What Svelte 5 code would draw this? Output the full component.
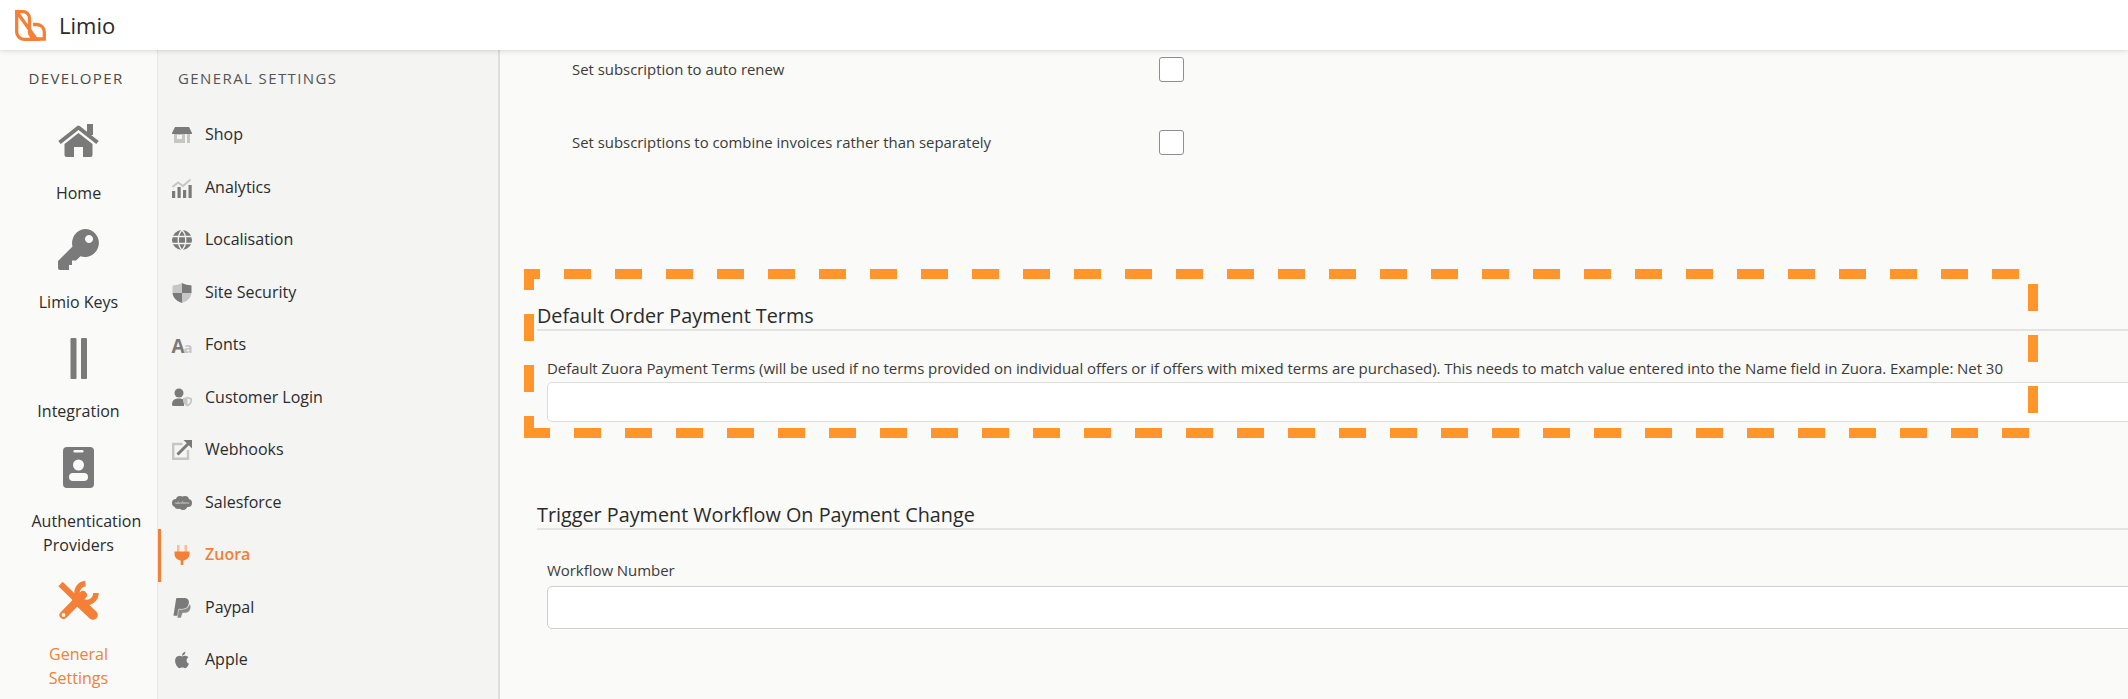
<script>
  const devItems = [
    { key: 'home', label: 'Home' },
    { key: 'key', label: 'Limio Keys' },
    { key: 'integration', label: 'Integration' },
    { key: 'auth', label: 'Authentication Providers' },
    { key: 'tools', label: 'General Settings', active: true }
  ];

  const settings = [
    { key: 'shop', label: 'Shop' },
    { key: 'analytics', label: 'Analytics' },
    { key: 'globe', label: 'Localisation' },
    { key: 'shield', label: 'Site Security' },
    { key: 'fonts', label: 'Fonts' },
    { key: 'login', label: 'Customer Login' },
    { key: 'hooks', label: 'Webhooks' },
    { key: 'salesforce', label: 'Salesforce' },
    { key: 'plug', label: 'Zuora', active: true },
    { key: 'paypal', label: 'Paypal' },
    { key: 'apple', label: 'Apple' }
  ];

  const dark = '#7a7a7a';
  const light = '#c6c6c6';
  const orange = '#f47f36';
  const bg = '#fafaf8';
  const bg2 = '#f4f4f3';
</script>

{#snippet devIcon(name)}
  {#if name === 'home'}
    <svg width="41" height="41" viewBox="0 -4 41 41">
      <rect x="29" y="0" width="6" height="11" fill={dark} />
      <path d="M1.5 18.5 20.5 3.5 39.5 18.5" fill="none" stroke={dark} stroke-width="4" stroke-linejoin="round" />
      <path d="M20.5 9 34.5 20V31a2 2 0 0 1-2 2H25V23H16V33H8.500a2 2 0 0 1-2-2V20Z" fill={dark} />
    </svg>
  {:else if name === 'key'}
    <svg width="41" height="41" viewBox="0 0 41 41">
      <path fill-rule="evenodd" fill={dark} d="M27 0a14 14 0 1 1-4.500 27.300L18 31.500H14V36H11V41H2a2 2 0 0 1-2-2V32L14.500 17.500A14 14 0 0 1 27 0ZM31 6a4 4 0 1 0 .01 0Z" />
    </svg>
  {:else if name === 'integration'}
    <svg width="41" height="41" viewBox="0 0 41 41">
      <rect x="12.500" y="0" width="6" height="41" rx="1" fill={dark} />
      <rect x="23" y="0" width="6" height="41" rx="1" fill={dark} />
    </svg>
  {:else if name === 'auth'}
    <svg width="41" height="41" viewBox="0 0 41 41">
      <rect x="5" y="0" width="31" height="41" rx="4" fill={dark} />
      <rect x="15.500" y="3" width="10" height="2.500" rx="1.200" fill={bg} />
      <circle cx="20.500" cy="18" r="5.500" fill={bg} />
      <rect x="11" y="26" width="19" height="8" rx="4" fill={bg} />
    </svg>
  {:else if name === 'tools'}
    <svg width="41" height="41" viewBox="0 0 41 41">
      <path d="M2.500 4 19 20" stroke={orange} stroke-width="6" fill="none" />
      <path d="M19 20 35 35" stroke={orange} stroke-width="9.500" stroke-linecap="round" fill="none" />
      <path d="M5.500 35 25 15" stroke={orange} stroke-width="8" stroke-linecap="round" fill="none" />
      <path d="M27.500 3.500A9.500 9.500 0 1 0 38 13" stroke={orange} stroke-width="5.500" fill="none" />
      <circle cx="5.500" cy="35" r="1.900" fill={bg} />
    </svg>
  {/if}
{/snippet}

{#snippet navIcon(name)}
  {#if name === 'shop'}
    <svg width="20" height="20" viewBox="0 0 20 20">
      <path d="M3 2H17L20 8a.8.8 0 0 1-.8 1H.8A.8.8 0 0 1 0 8Z" fill={dark} />
      <path d="M2 9H13V18H2ZM5 10V14H10V10ZM15 9H18V18H15Z" fill={light} fill-rule="evenodd" />
    </svg>
  {:else if name === 'analytics'}
    <svg width="20" height="20" viewBox="0 0 20 20">
      <path d="M0.500 9 6 4.500 11 8 18.500 1.500" fill="none" stroke={light} stroke-width="2" />
      <rect x="0" y="13" width="3.200" height="7" fill={dark} />
      <rect x="5.500" y="9" width="3.200" height="11" fill={dark} />
      <rect x="11" y="12" width="3.200" height="8" fill={dark} />
      <rect x="16.500" y="7" width="3.200" height="13" fill={dark} />
    </svg>
  {:else if name === 'globe'}
    <svg width="20" height="20" viewBox="0 0 20 20">
      <circle cx="10" cy="10" r="10" fill={dark} />
      <path d="M0 6.500H20M0 13.500H20M10 0C5 5 5 15 10 20M10 0C15 5 15 15 10 20" fill="none" stroke={bg2} stroke-width="1.300" />
    </svg>
  {:else if name === 'shield'}
    <svg width="20" height="20" viewBox="0 0 20 20">
      <path d="M10 0C7 1.500 4 2 0.500 2.500V10H10Z" fill={light} />
      <path d="M10 0C13 1.500 16 2 19.500 2.500V10H10Z" fill={dark} />
      <path d="M0.500 10C1 15 5 18.500 10 20V10Z" fill={dark} />
      <path d="M19.500 10C19 15 15 18.500 10 20V10Z" fill={light} />
    </svg>
  {:else if name === 'fonts'}
    <svg width="20" height="20" viewBox="0 0 20 20" overflow="visible">
      <text x="-0.500" y="18" font-family="Open Sans" font-weight="700" font-size="19" fill={dark}>A</text>
      <text x="11.500" y="18" font-family="Open Sans" font-weight="700" font-size="15" fill={light}>a</text>
    </svg>
  {:else if name === 'login'}
    <svg width="20" height="20" viewBox="0 0 20 20">
      <circle cx="7" cy="5" r="4.500" fill={dark} />
      <path d="M0 16.500C0 12 3 10.500 7 10.500 9.500 10.500 11 11 12 12V18H1.500A1.500 1.500 0 0 1 0 16.500Z" fill={dark} />
      <path d="M15.500 8.500C17 9.500 18.500 9.800 20 10V13C20 15.500 18 17.500 15.500 18.500 13 17.500 11 15.500 11 13V10C12.500 9.800 14 9.500 15.500 8.500Z" fill={light} />
      <path d="M15.500 10.500V16.500C17 15.800 18.300 14.500 18.300 13V11.500Z" fill={bg2} />
    </svg>
  {:else if name === 'hooks'}
    <svg width="20" height="20" viewBox="0 0 20 20">
      <path d="M10.500 4H1.200V18.800H16V10" fill="none" stroke={light} stroke-width="2.400" />
      <path d="M5.500 14.500 16 4" fill="none" stroke={dark} stroke-width="3" />
      <path d="M11.500 0H20V8.500Z" fill={dark} />
    </svg>
  {:else if name === 'salesforce'}
    <svg width="20" height="20" viewBox="0 0 20 20" overflow="visible">
      <g fill={dark}>
        <circle cx="4" cy="10" r="4" />
        <circle cx="8" cy="7" r="4" />
        <circle cx="13" cy="7" r="4" />
        <circle cx="16" cy="10" r="4" />
        <circle cx="11" cy="12.500" r="4.500" />
        <circle cx="6" cy="12.500" r="3.500" />
      </g>
      <text x="3" y="11" font-family="Open Sans" font-size="3" fill={bg2}>salesforce</text>
    </svg>
  {:else if name === 'plug'}
    <svg width="20" height="20" viewBox="0 0 20 20">
      <rect x="5" y="0" width="2.500" height="7" fill="#f9bd98" />
      <rect x="12.500" y="0" width="2.500" height="7" fill="#f9bd98" />
      <path d="M2.500 6.500H17.500V9C17.500 12.500 14.500 15 11.300 15.500V20H8.700V15.500C5.500 15 2.500 12.500 2.500 9Z" fill={orange} />
    </svg>
  {:else if name === 'paypal'}
    <svg width="20" height="20" viewBox="0 0 24 24">
      <path d="M7.076 21.337H2.470a.641.641 0 0 1-.633-.740L4.944.901C5.026.382 5.474 0 5.998 0h7.460c2.570 0 4.578.543 5.690 1.810 1.010 1.150 1.304 2.420 1.012 4.287-.023.143-.047.288-.077.437-.983 5.050-4.349 6.797-8.647 6.797h-2.190c-.524 0-.968.382-1.050.900l-1.120 7.106Z" fill={dark} />
      <path d="M9.500 24H6.800a.500.500 0 0 1-.500-.600L7.900 13.500h4.200c4.300 0 7.700-1.800 8.700-6.200 1.500 1 2 2.600 1.600 4.700-.9 4.600-3.900 6-7.700 6h-1.300c-.500 0-.900.300-1 .800L11.200 23c-.1.600-.600 1-1.700 1Z" fill="#8a8a8a" stroke={bg2} stroke-width=".6" />
    </svg>
  {:else if name === 'apple'}
    <svg width="20" height="20" viewBox="1 1 22 22">
      <path d="M17.050 20.280c-.980.950-2.050.800-3.080.350-1.090-.460-2.090-.480-3.240 0-1.440.620-2.200.440-3.060-.350C2.790 15.250 3.510 7.590 9.050 7.310c1.350.070 2.290.740 3.080.800 1.180-.240 2.310-.930 3.570-.840 1.510.120 2.650.720 3.400 1.800-3.120 1.870-2.380 5.980.480 7.130-.570 1.500-1.310 2.990-2.540 4.090ZM12.030 7.250c-.150-2.230 1.660-4.070 3.740-4.250.290 2.580-2.340 4.500-3.740 4.250Z" fill={dark} />
    </svg>
  {/if}
{/snippet}

<div class="app">
  <header class="topbar">
    <svg class="logo" width="31" height="31" viewBox="15 8 31 31">
      <path d="M16.700 9.700H23A6.500 6.500 0 0 1 29.500 16.200V30A7 7 0 0 0 36.500 37H44.300V30A7.500 7.500 0 0 0 36.800 22.500H33M36.500 37.300H24A7.300 7.300 0 0 1 16.700 30V9.700Z" fill="none" stroke={orange} stroke-width="3.300" />
    </svg>
    <span class="brand">Limio</span>
  </header>

  <div class="body">
    <aside class="rail">
      <div class="rail-title">DEVELOPER</div>
      <nav class="rail-list">
        {#each devItems as item}
          <div class="rail-item" class:active={item.active}>
            {@render devIcon(item.key)}
            <div class="rail-label">{item.label}</div>
          </div>
        {/each}
      </nav>
    </aside>

    <aside class="subnav">
      <div class="subnav-title">GENERAL SETTINGS</div>
      <nav>
        {#each settings as item}
          <div class="subnav-item" class:active={item.active}>
            {@render navIcon(item.key)}
            <span>{item.label}</span>
          </div>
        {/each}
      </nav>
    </aside>

    <main class="content">
      <div class="check-row">
        <span>Set subscription to auto renew</span>
        <input type="checkbox" />
      </div>
      <div class="check-row">
        <span>Set subscriptions to combine invoices rather than separately</span>
        <input type="checkbox" />
      </div>

      <section class="section first">
        <h2>Default Order Payment Terms</h2>
        <label class="field">
          <span>Default Zuora Payment Terms (will be used if no terms provided on individual offers or if offers with mixed terms are purchased). This needs to match value entered into the Name field in Zuora. Example: Net 30</span>
          <input type="text" class="thin" />
        </label>
      </section>

      <section class="section second">
        <h2>Trigger Payment Workflow On Payment Change</h2>
        <label class="field">
          <span>Workflow Number</span>
          <input type="text" />
        </label>
      </section>
    </main>
  </div>

  <!-- highlight drawn over the screenshot -->
  <svg class="highlight" width="2128" height="699" aria-hidden="true">
    <g stroke="#ff952b" stroke-width="10" stroke-dasharray="27 24" fill="none">
      <line x1="524" y1="274" x2="2019" y2="274" stroke-dashoffset="11" />
      <line x1="524" y1="433" x2="2029" y2="433" stroke-dashoffset="1" />
      <line x1="529" y1="269" x2="529" y2="438" stroke-dashoffset="6" />
      <line x1="2033" y1="284" x2="2033" y2="413" />
    </g>
  </svg>
</div>

<style>
  :global(body) {
    margin: 0;
    background: #fafaf8;
    font-family: 'Open Sans', sans-serif;
    color: #2b2b2b;
    overflow: hidden;
  }

  .app {
    position: relative;
    width: 2128px;
    height: 699px;
    overflow: hidden;
  }

  .topbar {
    position: relative;
    z-index: 2;
    display: flex;
    align-items: center;
    gap: 13px;
    height: 50px;
    padding-left: 15px;
    background: #fff;
    box-shadow: 0 1px 5px rgba(0, 0, 0, 0.14);
    box-sizing: border-box;
  }

  .brand {
    font-size: 22px;
    color: #2a2a2a;
  }

  .body {
    display: flex;
    height: 649px;
  }

  .rail {
    flex: 0 0 157px;
    padding-top: 18px;
    background: #fafaf8;
    box-sizing: border-box;
  }

  .rail-title,
  .subnav-title {
    font-size: 15px;
    line-height: 20px;
    letter-spacing: 1.4px;
    color: #4a4a4a;
  }

  .rail-title {
    padding-right: 5px;
    text-align: center;
    margin-bottom: 32px;
  }

  .rail-list {
    display: flex;
    flex-direction: column;
    gap: 24px;
  }

  .rail-item {
    display: flex;
    flex-direction: column;
    align-items: center;
  }

  .rail-item svg {
    display: block;
  }

  .rail-label {
    width: 94px;
    margin-top: 20px;
    font-size: 16px;
    line-height: 24px;
    text-align: center;
  }

  /* the two-line labels sit a pixel lower */
  .rail-item:nth-child(n + 4) .rail-label {
    margin-top: 21px;
  }

  .rail-item:nth-child(4) {
    margin-bottom: -1px;
  }

  .rail-item.active .rail-label {
    color: #f47f36;
  }

  .subnav {
    flex: 0 0 343px;
    padding-top: 18px;
    background: #f4f4f3;
    border-left: 1px solid #e6e6e4;
    border-right: 2px solid #dededc;
    box-sizing: border-box;
  }

  .subnav-title {
    padding-left: 20px;
    margin-bottom: 21px;
    color: #555;
  }

  .subnav-item {
    display: flex;
    align-items: center;
    gap: 13px;
    height: 52.5px;
    padding-left: 11px;
    border-left: 3px solid transparent;
    font-size: 16px;
  }

  .subnav-item svg {
    flex: none;
  }

  .subnav-item span {
    margin-top: -2px;
  }

  .subnav-item.active {
    border-left-color: #f47f36;
    color: #f47f36;
    font-weight: 600;
  }

  .content {
    flex: 1;
    min-width: 0;
    padding-top: 7px;
    overflow: hidden;
  }

  .check-row {
    display: flex;
    align-items: center;
    height: 25px;
    margin-bottom: 48px;
    padding-left: 72px;
    font-size: 14.9px;
    color: #3a3a3a;
  }

  .check-row span {
    width: 587px;
    margin-top: -1px;
  }

  .check-row input {
    appearance: none;
    width: 25px;
    height: 25px;
    margin: 0;
    background: #fff;
    border: 1.500px solid #8e8e8e;
    border-radius: 3px;
    box-sizing: border-box;
  }

  .section {
    margin-left: 37px;
  }

  .section.first {
    margin-top: 149px;
  }

  .section.second {
    margin-top: 81px;
  }

  h2 {
    margin: 0;
    font-size: 19.8px;
    font-weight: 400;
    line-height: 24px;
    padding-bottom: 1px;
    border-bottom: 2px solid #e4e4e2;
    color: #2a2a2a;
  }

  .field {
    display: block;
    padding-left: 10px;
  }

  .field span {
    display: block;
    font-size: 15px;
    letter-spacing: -0.05px;
    line-height: 20px;
    color: #3a3a3a;
  }

  .first .field span {
    margin-top: 27px;
    margin-bottom: 4px;
  }

  .second .field span {
    margin-top: 30px;
    margin-bottom: 6px;
  }

  .field input {
    display: block;
    width: calc(100% + 20px);
    height: 43px;
    background: #fff;
    border: 1.500px solid #cfcfcf;
    border-radius: 5px;
    box-sizing: border-box;
  }

  .field input.thin {
    height: 40px;
    border-color: #dddddb;
  }

  .highlight {
    position: absolute;
    top: 0;
    left: 0;
    z-index: 3;
    pointer-events: none;
  }
</style>
